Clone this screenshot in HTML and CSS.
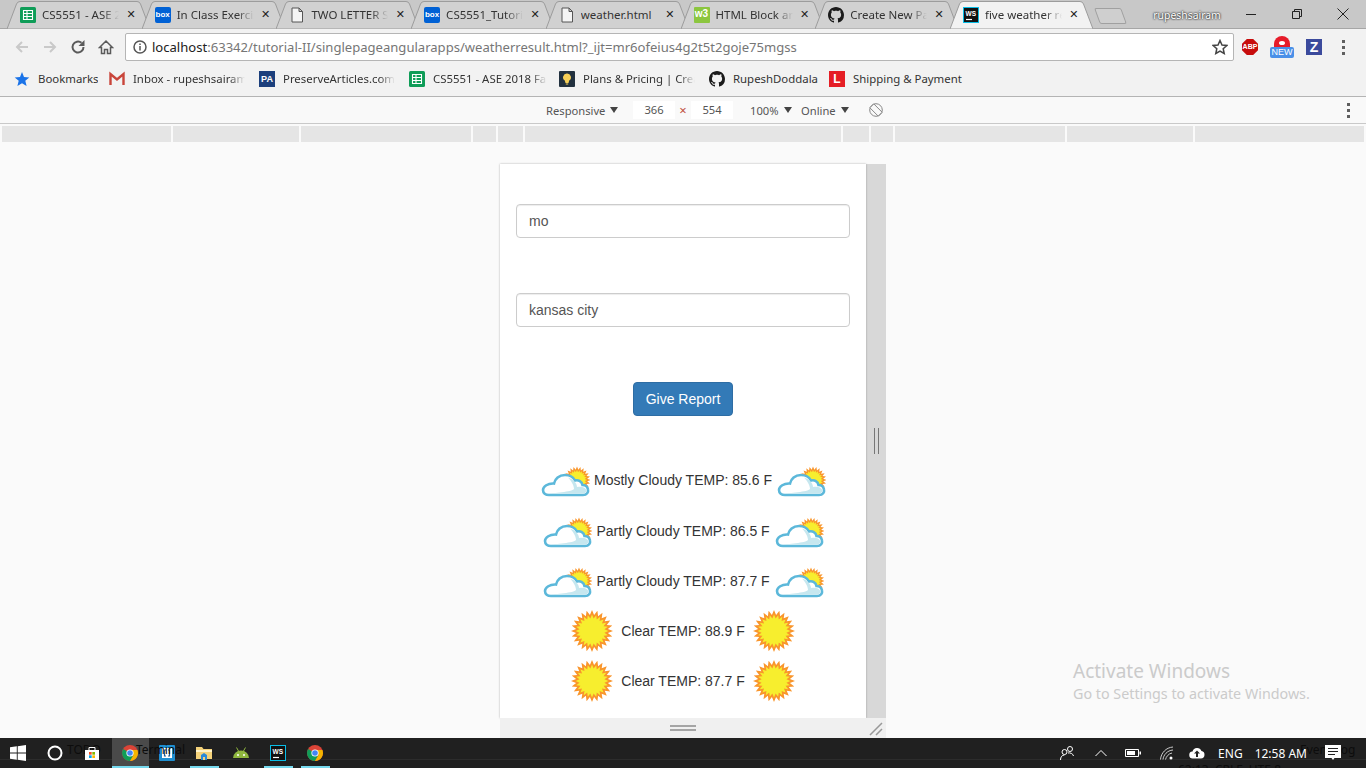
FILE: index.html
```html
<!DOCTYPE html>
<html lang="en">
<head>
  <meta charset="UTF-8">
  <title>five weather report</title>
  <link rel="stylesheet" href="styles.css">
</head>
<body>
  <!-- shared shapes -->
  <svg class="defs" width="0" height="0">
    <symbol id="tab-shape" viewBox="0 0 143 28">
      <path d="M0 28.5 9.5 3.5Q10.5 1 13 1H130Q132.500 1 133.500 3.500L143 28.500Z"/>
    </symbol>
    <symbol id="sheet" viewBox="0 0 16 16">
      <rect width="16" height="16" rx="1.500" fill="#0f9d58"/>
      <path d="M3.500 3.500h9v9h-9zM3.500 6.500h9M3.500 9.500h9M7 3.500v9" fill="none" stroke="#fff" stroke-width="1.100"/>
    </symbol>
    <symbol id="page" viewBox="0 0 16 16">
      <path d="M3 1h7l3.500 3.500V15H3zM10 1v3.500h3.500" fill="#f4f4f4" stroke="#555" stroke-width="1"/>
    </symbol>
    <symbol id="github" viewBox="0 0 16 16">
      <path d="M8 0C3.580 0 0 3.580 0 8c0 3.540 2.290 6.530 5.470 7.590.4.070.55-.17.55-.38 0-.19-.01-.82-.01-1.490-2.010.37-2.530-.49-2.690-.94-.09-.23-.48-.94-.82-1.130-.28-.15-.68-.52-.01-.53.63-.01 1.080.58 1.230.82.720 1.210 1.870.87 2.330.66.070-.52.280-.87.510-1.070-1.780-.2-3.640-.89-3.640-3.950 0-.87.310-1.590.820-2.150-.08-.2-.36-1.020.080-2.120 0 0 .670-.21 2.200.82.640-.18 1.320-.27 2-.27.680 0 1.360.090 2 .27 1.530-1.040 2.200-.82 2.200-.82.440 1.100.160 1.920.080 2.120.510.560.820 1.270.820 2.150 0 3.070-1.870 3.750-3.650 3.950.290.250.540.730.540 1.480 0 1.070-.01 1.930-.01 2.200 0 .21.150.46.550.38A8.013 8.013 0 0016 8c0-4.420-3.580-8-8-8z" fill="#1b1b1b"/>
    </symbol>
    <symbol id="chrome" viewBox="0 0 16 16">
      <circle cx="8" cy="8" r="8" fill="#db4437"/>
      <path d="M8 8 1.100 4A8 8 0 0 0 8 16l3.500-6z" fill="#0f9d58"/>
      <path d="M8 5h7.400A8 8 0 0 1 8 16l3.500-6z" fill="#f4b400"/>
      <circle cx="8" cy="8" r="3.600" fill="#fff"/>
      <circle cx="8" cy="8" r="2.800" fill="#4285f4"/>
    </symbol>
    <symbol id="ws" viewBox="0 0 16 16">
      <rect x=".5" y=".5" width="15" height="15" fill="#111" stroke="#09bde6"/>
      <path d="M3 12.500h6" stroke="#fff" stroke-width="1.200"/>
      <text x="2.500" y="8.800" class="ws-text">WS</text>
    </symbol>
    <symbol id="cloud-sun" viewBox="0 0 50 50">
      <g transform="translate(37 25) scale(.64)">
        <use href="#burst" fill="#f9952b"/>
        <use href="#burst" fill="#f7ee2e" transform="scale(.76)"/>
        <circle r="12" fill="#f7ee2e"/>
      </g>
      <path d="M9 40H43C47 40 48.500 37 48 34.500C47.500 31.500 45 30 42.500 30C42 26.500 38.500 24.500 35 25.500C33.500 22 29 20 25 20C19 20 15 24 14 28.500C8 28 3 31.500 3 35C3 38 5.500 40 9 40Z" fill="#fff" stroke="#5cb8da" stroke-width="2.600"/>
      <path d="M28 22.500C33 24 37 28 37 32C41 31 45 32 46.500 35C46.500 37 45 38.500 43 38.700H7C13 38 32 37 34 34C34 30 31 25.500 28 22.500Z" fill="#c6e7ef"/>
    </symbol>
    <symbol id="sun" viewBox="0 0 50 50">
      <g transform="translate(25 25)">
        <use href="#burst" fill="#f9952b"/>
        <use href="#burst" fill="#f7ee2e" transform="scale(.78)"/>
        <circle r="12" fill="#f7ee2e"/>
      </g>
    </symbol>
    <polygon id="burst" points="21,0 15.900,2.100 20.300,5.400 14.800,6.100 18.200,10.500 12.700,9.700 14.800,14.800 9.700,12.700 10.500,18.200 6.100,14.800 5.400,20.300 2.100,15.900 0,21 -2.100,15.900 -5.400,20.300 -6.100,14.800 -10.500,18.200 -9.700,12.700 -14.800,14.800 -12.700,9.700 -18.200,10.500 -14.800,6.100 -20.300,5.400 -15.900,2.100 -21,0 -15.900,-2.100 -20.300,-5.400 -14.800,-6.100 -18.200,-10.500 -12.700,-9.700 -14.800,-14.800 -9.700,-12.700 -10.500,-18.200 -6.100,-14.800 -5.400,-20.300 -2.100,-15.900 0,-21 2.100,-15.900 5.400,-20.300 6.100,-14.800 10.500,-18.200 9.700,-12.700 14.800,-14.800 12.700,-9.700 18.200,-10.500 14.800,-6.100 20.300,-5.400 15.900,-2.100"/>
  </svg>

  <!-- tab strip -->
  <div class="tabstrip">
    <div class="tab"><svg class="tab-bg"><use href="#tab-shape"/></svg><svg class="ico"><use href="#sheet"/></svg><span class="tab-title">CS5551 - ASE 2018 Fall</span><span class="tab-close">&#10005;</span></div>
    <div class="tab"><svg class="tab-bg"><use href="#tab-shape"/></svg><span class="ico box-ico">box</span><span class="tab-title">In Class Exercise 5</span><span class="tab-close">&#10005;</span></div>
    <div class="tab"><svg class="tab-bg"><use href="#tab-shape"/></svg><svg class="ico"><use href="#page"/></svg><span class="tab-title">TWO LETTER STATE</span><span class="tab-close">&#10005;</span></div>
    <div class="tab"><svg class="tab-bg"><use href="#tab-shape"/></svg><span class="ico box-ico">box</span><span class="tab-title">CS5551_Tutorial</span><span class="tab-close">&#10005;</span></div>
    <div class="tab"><svg class="tab-bg"><use href="#tab-shape"/></svg><svg class="ico"><use href="#page"/></svg><span class="tab-title no-fade">weather.html</span><span class="tab-close">&#10005;</span></div>
    <div class="tab"><svg class="tab-bg"><use href="#tab-shape"/></svg><span class="ico w3-ico">w3</span><span class="tab-title">HTML Block and</span><span class="tab-close">&#10005;</span></div>
    <div class="tab"><svg class="tab-bg"><use href="#tab-shape"/></svg><svg class="ico"><use href="#github"/></svg><span class="tab-title">Create New Page</span><span class="tab-close">&#10005;</span></div>
    <div class="tab active"><svg class="tab-bg"><use href="#tab-shape"/></svg><svg class="ico"><use href="#ws"/></svg><span class="tab-title">five weather report</span><span class="tab-close">&#10005;</span></div>
    <div class="new-tab"></div>
    <span class="profile">rupeshsairam</span>
    <div class="win-controls">
      <svg width="14" height="14" viewBox="0 0 14 14"><path d="M2 7.500h10" stroke="#222"/></svg>
      <svg width="14" height="14" viewBox="0 0 14 14"><path d="M2.500 4.500h7v7h-7zM4.500 4.500v-2h7v7h-2" fill="none" stroke="#222"/></svg>
      <svg width="14" height="14" viewBox="0 0 14 14"><path d="M1.500 1.500l11 11M12.500 1.500l-11 11" stroke="#222"/></svg>
    </div>
  </div>

  <!-- address bar -->
  <div class="toolbar">
    <svg class="tool" viewBox="0 0 16 16"><path d="M14 8H3M8 3 3 8l5 5" fill="none" stroke="#c9c9c9" stroke-width="2"/></svg>
    <svg class="tool" viewBox="0 0 16 16"><path d="M2 8h11M8 3l5 5-5 5" fill="none" stroke="#c9c9c9" stroke-width="2"/></svg>
    <svg class="tool" viewBox="0 0 16 16"><path d="M13.500 8A5.500 5.500 0 1 1 11.500 3.800" fill="none" stroke="#5a5a5a" stroke-width="2"/><path d="M14.500 1v6h-6z" fill="#5a5a5a"/></svg>
    <svg class="tool" viewBox="0 0 16 16"><path d="M1.500 8.500 8 2l6.500 6.500H12.500V14.500H9.500V10.500H6.500V14.500H3.500V8.500Z" fill="none" stroke="#5a5a5a" stroke-width="1.500"/></svg>
    <div class="omnibox">
      <svg class="info" width="14" height="14" viewBox="0 0 14 14"><circle cx="7" cy="7" r="6" fill="none" stroke="#555" stroke-width="1.500"/><path d="M7 6v4.500M7 3.500v1.500" stroke="#555" stroke-width="1.500"/></svg>
      <span class="url"><b>localhost</b>:63342/tutorial-II/singlepageangularapps/weatherresult.html?_ijt=mr6ofeius4g2t5t2goje75mgss</span>
      <svg class="star" width="16" height="16" viewBox="0 0 16 16"><path d="M8 1.500 10 6l4.800.5-3.600 3.200 1 4.800L8 12l-4.200 2.500 1-4.800L1.200 6.500 6 6z" fill="none" stroke="#444" stroke-width="1.500"/></svg>
    </div>
    <div class="extensions">
      <span class="abp">ABP</span>
      <span class="ext-new"><span class="ext-dome"></span><span class="ext-badge">NEW</span></span>
      <span class="ext-z">Z</span>
      <span class="kebab"><i></i><i></i><i></i></span>
    </div>
  </div>

  <!-- bookmarks -->
  <div class="bookmarks">
    <div class="bm snug"><svg class="ico" viewBox="0 0 16 16"><path d="M8 1 10 6l5.300.4-4 3.400 1.300 5.200L8 12.200 3.400 15l1.300-5.200-4-3.400L6 6z" fill="#1a73e8"/></svg><span class="bm-name w60">Bookmarks</span></div>
    <div class="bm"><svg class="ico" viewBox="0 0 16 16"><path d="M1.500 14V3L8 8.500 14.500 3V14" fill="none" stroke="#c9453a" stroke-width="2.400"/></svg><span class="bm-name w112">Inbox - rupeshsairam</span></div>
    <div class="bm"><span class="ico pa-ico">PA</span><span class="bm-name w112">PreserveArticles.com:</span></div>
    <div class="bm tight"><svg class="ico"><use href="#sheet"/></svg><span class="bm-name w114">CS5551 - ASE 2018 Fall</span></div>
    <div class="bm"><span class="ico bulb-ico"><svg width="16" height="16" viewBox="0 0 16 16"><path d="M8 2.500a3.800 3.800 0 0 1 2.200 7L9.500 12h-3l-.7-2.500A3.800 3.800 0 0 1 8 2.500z" fill="#f6cf57"/><path d="M6.800 13h2.400" stroke="#f6cf57"/></svg></span><span class="bm-name w112">Plans &amp; Pricing | Create</span></div>
    <div class="bm snug"><svg class="ico"><use href="#github"/></svg><span class="bm-name w85">RupeshDoddala</span></div>
    <div class="bm"><span class="ico l-ico">L</span><span class="bm-name">Shipping &amp; Payment</span></div>
  </div>

  <!-- device toolbar -->
  <div class="device-bar">
    <span class="dd dd-resp">Responsive<i></i></span>
    <span class="dim">366</span><span class="times">&#215;</span><span class="dim">554</span>
    <span class="dd dd-zoom">100%<i></i></span>
    <span class="dd dd-net">Online<i></i></span>
    <svg class="rotate" width="14" height="14" viewBox="0 0 14 14"><circle cx="7" cy="7" r="6.300" fill="none" stroke="#888"/><path d="M4.800 .9 13.100 9.200 9.200 13.100 .9 4.800Z" fill="#f9f9f9" stroke="#888"/></svg>
    <span class="kebab"><i></i><i></i><i></i></span>
  </div>

  <!-- media query bars -->
  <div class="media-bar">
    <i class="m1"></i><i class="m2"></i><i class="m3"></i><i class="m4"></i><i class="m5"></i><i class="m6"></i><i class="m7"></i><i class="m8"></i><i class="m3"></i><i class="m2"></i><i class="m1"></i>
  </div>

  <!-- emulated device -->
  <div class="viewport">
    <div class="device-wrap">
      <div class="device-row">
        <main class="device">
          <input class="form-control" type="text" value="mo">
          <input class="form-control second" type="text" value="kansas city">
          <button class="btn" type="button">Give Report</button>
          <div class="report">
            <div class="day"><svg class="wx"><use href="#cloud-sun"/></svg><span>Mostly Cloudy TEMP: 85.6 F</span><svg class="wx"><use href="#cloud-sun"/></svg></div>
            <div class="day"><svg class="wx"><use href="#cloud-sun"/></svg><span>Partly Cloudy TEMP: 86.5 F</span><svg class="wx"><use href="#cloud-sun"/></svg></div>
            <div class="day"><svg class="wx"><use href="#cloud-sun"/></svg><span>Partly Cloudy TEMP: 87.7 F</span><svg class="wx"><use href="#cloud-sun"/></svg></div>
            <div class="day"><svg class="wx"><use href="#sun"/></svg><span>Clear TEMP: 88.9 F</span><svg class="wx"><use href="#sun"/></svg></div>
            <div class="day"><svg class="wx"><use href="#sun"/></svg><span>Clear TEMP: 87.7 F</span><svg class="wx"><use href="#sun"/></svg></div>
          </div>
        </main>
        <div class="handle-right"><i></i></div>
      </div>
      <div class="handle-bottom">
        <i class="grip"></i>
        <svg class="corner" width="14" height="14" viewBox="0 0 14 14"><path d="M1 13 13 1M7 13l6-6" stroke="#999" stroke-width="1.500"/></svg>
      </div>
    </div>
    <div class="activate">
      <div class="activate-title">Activate Windows</div>
      <div class="activate-sub">Go to Settings to activate Windows.</div>
    </div>
  </div>

  <!-- windows taskbar -->
  <div class="taskbar">
    <span class="ghost g-todo">TODO</span>
    <span class="ghost g-term">Terminal</span>
    <span class="ghost g-event">Event Log</span>
    <span class="ghost g-status">62:13 &nbsp;CRLF &nbsp;UTF-8</span>
    <div class="task start"><svg width="16" height="16" viewBox="0 0 16 16"><path d="M0 2.300 6.800 1.300V7.500H0zM7.700 1.200 16 0V7.500H7.700zM0 8.400H6.800V14.700L0 13.700zM7.700 8.400H16V16L7.700 14.800z" fill="#fff"/></svg></div>
    <div class="task"><svg width="16" height="16" viewBox="0 0 16 16"><circle cx="8" cy="8" r="6.500" fill="none" stroke="#fff" stroke-width="2"/></svg></div>
    <div class="task store"><svg width="16" height="16" viewBox="0 0 16 16"><path d="M1 5h14v10H1z" fill="#fff"/><path d="M5 5V2.500h6V5" fill="none" stroke="#fff"/><path d="M5 7h2.700v2.700H5z" fill="#f25022"/><path d="M8.300 7H11v2.700H8.300z" fill="#7fba00"/><path d="M5 10.300h2.700V13H5z" fill="#00a4ef"/><path d="M8.300 10.300H11V13H8.300z" fill="#ffb900"/></svg></div>
    <div class="task running current"><svg width="16" height="16"><use href="#chrome"/></svg></div>
    <div class="task"><svg width="16" height="16" viewBox="0 0 16 16"><rect width="16" height="16" rx="1" fill="#1f8fd0"/><path d="M3 3h10v10H3z" fill="#fff"/><path d="M7 5H5.500v6H7M9 5h1.500v6H9" fill="none" stroke="#1f5f8f" stroke-width="1.200"/></svg></div>
    <div class="task running"><svg width="16" height="16" viewBox="0 0 16 16"><path d="M0 2h6l1.500 2H16v10H0z" fill="#f4d27a"/><path d="M0 5h16v2H0z" fill="#fff3c9"/><path d="M5 15v-5l3-2 3 2v5z" fill="#2b8ad8"/><path d="M7 15v-3h2v3z" fill="#f4d27a"/></svg></div>
    <div class="task"><svg width="16" height="16" viewBox="0 0 16 16"><path d="M0 13a8 7.500 0 0 1 16 0z" fill="#8fb63e"/><path d="M3.500 2.500 5.500 6M12.500 2.500 10.500 6" stroke="#8fb63e"/><circle cx="5" cy="10" r="1" fill="#fff"/><circle cx="11" cy="10" r="1" fill="#fff"/></svg></div>
    <div class="task running"><svg width="16" height="16"><use href="#ws"/></svg></div>
    <div class="task running"><svg width="16" height="16"><use href="#chrome"/></svg></div>
    <div class="tray">
      <svg class="tray-people" width="16" height="16" viewBox="0 0 16 16"><circle cx="11" cy="4" r="2.500" fill="none" stroke="#fff"/><circle cx="5.500" cy="7" r="2.500" fill="none" stroke="#fff"/><path d="M1.500 15c0-3 1.500-5 4-5M9 8c2-.5 5 .5 5.500 3" fill="none" stroke="#fff"/></svg>
      <svg class="tray-caret" width="14" height="10" viewBox="0 0 14 10"><path d="M1.500 8 7 2.500 12.500 8" fill="none" stroke="#fff"/></svg>
      <svg class="tray-batt" width="16" height="10" viewBox="0 0 16 10"><path d="M.5 1.500h13v7H.5z" fill="none" stroke="#fff"/><path d="M2 3h8v4H2zM14.500 3.500H16v3h-1.500z" fill="#fff"/></svg>
      <svg class="tray-wifi" width="14" height="14" viewBox="0 0 14 14"><path d="M.5 13.500C1 7 6 1.500 13 1M3 13.500C3.500 9 7 4.500 13 4M5.500 13.500C6 11 8.500 7.500 12 7" fill="none" stroke="#ccc"/><circle cx="11" cy="12" r="1.500" fill="#fff"/></svg>
      <svg class="tray-cloud" width="16" height="12" viewBox="0 0 16 12"><path d="M4 11.500a3.500 3.500 0 0 1-.5-7A4.800 4.800 0 0 1 12.500 4a3.800 3.800 0 0 1-.5 7.500z" fill="#fff"/><path d="M8 3.500 5 6.500h2V10h2V6.500h2z" fill="#222"/></svg>
      <span class="tray-lang">ENG</span>
      <span class="tray-time">12:58 AM</span>
      <svg class="tray-note" width="16" height="16" viewBox="0 0 16 16"><path d="M0 0h16v13H9.500L8 15 6.500 13H0z" fill="#fff"/><path d="M3 3.500h10M3 6.500h10M3 9.500h7" stroke="#222"/></svg>
    </div>
  </div>
</body>
</html>
```

FILE: styles.css
```css
* { box-sizing: border-box; }
html, body { height: 100%; }
body {
  margin: 0;
  height: 768px;
  overflow: hidden;
  display: flex;
  flex-direction: column;
  background: #fafafa;
  font-family: "Noto Sans", "Open Sans", sans-serif;
  font-size: 12px;
  color: #333;
}
.defs { position: absolute; }
.ico { width: 16px; height: 16px; flex: none; }
.ws-text { font: bold 6.500px "Liberation Sans", sans-serif; fill: #fff; }

/* tabs */
.tabstrip {
  height: 29px;
  flex: none;
  display: flex;
  padding-left: 7px;
  background: #c8c8c8;
  box-shadow: inset 0 -1px 0 #a6a6a6;
  position: relative;
}
.tab {
  position: relative;
  width: 143px;
  margin-right: -8.300px;
  height: 29px;
  flex: none;
  display: flex;
  align-items: center;
  padding: 0 0 0 13px;
  color: #333;
  font-size: 11.500px;
}
.tab-bg {
  position: absolute;
  left: 0;
  top: 0;
  width: 143px;
  height: 29px;
  fill: #d1d1d1;
  stroke: #9c9c9c;
  stroke-width: 1;
}
.tab.active { z-index: 2; }
.tab.active .tab-bg { fill: #f2f2f2; }
.tab > .ico, .tab-title, .tab-close { position: relative; }
.tab-title {
  margin-left: 6px;
  width: 77px;
  white-space: nowrap;
  overflow: hidden;
  -webkit-mask-image: linear-gradient(to right, #000 78%, transparent 100%);
  mask-image: linear-gradient(to right, #000 78%, transparent 100%);
}
.tab-title.no-fade { -webkit-mask-image: none; mask-image: none; }
.tab-close {
  margin-left: 6px;
  width: 12px;
  text-align: center;
  font-size: 11px;
  font-weight: bold;
  color: #222;
  font-family: "DejaVu Sans", sans-serif;
}
.box-ico {
  background: #0061d5;
  color: #fff;
  border-radius: 2px;
  font: bold 8px/16px "Liberation Sans", sans-serif;
  text-align: center;
}
.w3-ico {
  background: #8cc63f;
  color: #fff;
  border-radius: 1px;
  font: bold 10px/14px "Liberation Sans", sans-serif;
  text-align: center;
}
.new-tab {
  position: relative;
  margin: 8px 0 0 12.700px;
  width: 27px;
  height: 16px;
  background: #cfcfcf;
  border: 1px solid #a0a0a0;
  border-radius: 2px;
  transform: skewX(20deg);
  z-index: 1;
}
.profile {
  margin: 8px 0 0 29px;
  width: 67px;
  color: #fff;
  font-size: 10.400px;
  text-shadow: 0 0 2px #222, 0 0 2px #222;
  white-space: nowrap;
}
.win-controls {
  display: flex;
  margin-left: 24px;
  padding-top: 7px;
  gap: 32px;
  align-items: flex-start;
}

/* toolbar */
.toolbar {
  height: 36px;
  flex: none;
  display: flex;
  align-items: center;
  padding-left: 14px;
  background: #f2f2f2;
}
.tool { width: 16px; height: 16px; margin-right: 12px; flex: none; }
.omnibox {
  width: 1109px;
  height: 28px;
  margin-left: -1px;
  flex: none;
  display: flex;
  align-items: center;
  padding: 0 5px 0 7px;
  background: #fff;
  border: 1px solid #b5b5b5;
  border-radius: 2px;
}
.url {
  margin-left: 5px;
  color: #767676;
  font-size: 13.070px;
  white-space: nowrap;
}
.url b { font-weight: normal; color: #222; }
.star { margin-left: auto; }
.extensions {
  display: flex;
  align-items: center;
  margin-left: 8px;
}
.abp {
  width: 16px;
  height: 16px;
  background: #c70d0d;
  clip-path: polygon(30% 0, 70% 0, 100% 30%, 100% 70%, 70% 100%, 30% 100%, 0 70%, 0 30%);
  color: #fff;
  font: bold 7px/16px "Liberation Sans", sans-serif;
  text-align: center;
}
.ext-new {
  position: relative;
  width: 24px;
  height: 22px;
  margin-left: 12px;
}
.ext-dome {
  display: block;
  width: 16px;
  height: 12px;
  margin: 0 auto;
  background: #e61c2a;
  border-radius: 8px 8px 0 0;
}
.ext-dome::after {
  content: "";
  display: block;
  width: 6px;
  height: 4px;
  margin: 0 auto;
  position: relative;
  top: 5px;
  background: #fff;
  border-radius: 50%;
}
.ext-badge {
  position: absolute;
  left: 0;
  top: 11px;
  width: 24px;
  height: 11px;
  background: #4a90e8;
  border-radius: 2px;
  color: #fff;
  font: 9px/11px "Liberation Sans", sans-serif;
  text-align: center;
}
.ext-z {
  width: 16px;
  height: 16px;
  margin-left: 12px;
  background: #3b4a9c;
  color: #fff;
  font: bold 14px/16px "Liberation Sans", sans-serif;
  text-align: center;
}
.kebab {
  display: flex;
  flex-direction: column;
  gap: 3px;
  margin-left: 20px;
}
.kebab i {
  width: 3px;
  height: 3px;
  background: #5f5f5f;
}

/* bookmarks */
.bookmarks {
  height: 32px;
  flex: none;
  display: flex;
  align-items: center;
  padding: 0 0 4px 14px;
  background: #f2f2f2;
  border-bottom: 1px solid #b4b4b4;
  color: #333;
}
.bm {
  display: flex;
  align-items: center;
  gap: 8px;
  margin-right: 14px;
  font-size: 11.400px;
  white-space: nowrap;
}
.bm.tight { margin-right: 12px; }
.bm.snug { margin-right: 11px; }
.bm-name { overflow: hidden; }
.w60 { width: 60px; }
.w85 { width: 85px; }
.w112, .w114 {
  width: 112px;
  -webkit-mask-image: linear-gradient(to right, #000 86%, transparent 100%);
  mask-image: linear-gradient(to right, #000 86%, transparent 100%);
}
.w114 { width: 114px; }
.pa-ico {
  background: #1c3f7c;
  color: #fff;
  font: bold 9px/16px "Liberation Sans", sans-serif;
  text-align: center;
}
.bulb-ico { background: #22313f; display: block; border-radius: 1px; }
.bulb-ico svg { display: block; }
.l-ico {
  background: #e51e25;
  color: #fff;
  font: bold 12px/16px "Liberation Sans", sans-serif;
  text-align: center;
}

/* device toolbar */
.device-bar {
  height: 27px;
  flex: none;
  display: flex;
  align-items: center;
  padding: 0 16px 0 546px;
  background: #f9f9f9;
  border-bottom: 1px solid #c9c9c9;
  color: #555;
  font-size: 11.200px;
}
.dd { display: flex; align-items: center; white-space: nowrap; }
.dd i {
  margin-left: 5px;
  border-left: 4px solid transparent;
  border-right: 4px solid transparent;
  border-top: 6px solid #444;
}
.dd-resp { width: 87px; }
.dim {
  width: 42px;
  height: 18px;
  line-height: 18px;
  text-align: center;
  background: #fff;
}
.times { width: 16px; text-align: center; color: #c0503c; font-size: 13px; }
.dd-zoom { margin-left: 17px; width: 51px; }
.dd-net { width: 68px; }
.device-bar .kebab { margin-left: auto; }
.rotate { flex: none; }

/* media query bars */
.media-bar {
  height: 18px;
  flex: none;
  display: flex;
  gap: 2px;
  padding: 2px 2px 0;
  background: #fafafa;
}
.media-bar i { background: #e5e5e5; height: 16px; }
.m1 { width: 169px; }
.m2 { width: 126px; }
.m3 { width: 170px; }
.m4 { width: 23px; }
.m5 { width: 25px; }
.m6 { width: 316px; }
.m7 { width: 26px; }
.m8 { width: 22px; }

/* device */
.viewport {
  flex: 1;
  position: relative;
  display: flex;
  justify-content: center;
  padding: 22px 0 0 20px;
  background: #fafafa;
  overflow: hidden;
}
.device-wrap { width: 386px; }
.device-row { display: flex; height: 554px; }
.device {
  width: 366px;
  padding: 40px 16px 0;
  background: #fff;
  box-shadow: 0 0 2px rgba(0,0,0,.3);
  font-family: "Liberation Sans", Arial, sans-serif;
  font-size: 14px;
  color: #333;
  position: relative;
}
.handle-right {
  width: 20px;
  background: #d8d8d8;
  display: flex;
  align-items: center;
  justify-content: center;
}
.handle-right i {
  width: 5px;
  height: 26px;
  border-left: 1px solid #777;
  border-right: 1px solid #777;
}
.handle-bottom {
  height: 20px;
  background: #f0f0f0;
  display: flex;
  align-items: center;
  justify-content: center;
  padding-right: 20px;
  position: relative;
}
.grip {
  width: 26px;
  height: 6px;
  border-top: 2px solid #a5a5a5;
  border-bottom: 2px solid #a5a5a5;
}
.corner { position: absolute; right: 3px; top: 4px; }
.form-control {
  display: block;
  width: 100%;
  height: 34px;
  padding: 6px 12px;
  font: 14px "Liberation Sans", Arial, sans-serif;
  color: #555;
  background: #fff;
  border: 1px solid #ccc;
  border-radius: 4px;
  box-shadow: inset 0 1px 1px rgba(0,0,0,.075);
}
.form-control.second { margin-top: 55px; }
.btn {
  display: block;
  margin: 55px auto 0;
  width: 100px;
  height: 34px;
  padding: 0;
  font: 14px "Liberation Sans", Arial, sans-serif;
  color: #fff;
  background: #337ab7;
  border: 1px solid #2e6da4;
  border-radius: 4px;
}
.report { margin-top: 39px; }
.day {
  height: 50px;
  display: flex;
  align-items: center;
  justify-content: center;
  gap: 4px;
  white-space: nowrap;
}
.day:first-child { margin-bottom: 1px; }
.wx { width: 50px; height: 50px; flex: none; }
.activate {
  position: absolute;
  left: 1073px;
  top: 517px;
  color: #cbcbcb;
}
.activate-title { font-size: 19px; line-height: 25px; }
.activate-sub { font-size: 14.300px; line-height: 20px; white-space: nowrap; }

/* taskbar */
.taskbar {
  height: 30px;
  flex: none;
  position: relative;
  display: flex;
  align-items: stretch;
  background: #202020;
  overflow: hidden;
  color: #fff;
}
.taskbar::before {
  content: "";
  position: absolute;
  left: 0;
  right: 0;
  top: 21px;
  height: 1px;
  background: #2c2c2c;
}
.task {
  position: relative;
  width: 37px;
  display: flex;
  align-items: center;
  justify-content: center;
  flex: none;
}
.task.start { width: 36px; }
.task.store { width: 38.500px; }
.task.running::after {
  content: "";
  position: absolute;
  left: 4px;
  right: 4px;
  bottom: 0;
  height: 2px;
  background: #76d9ee;
}
.task.current { background: #4a4a4a; }
.task.current::after { left: 0; right: 0; }
.ghost {
  position: absolute;
  color: #0c0c0c;
  font-size: 12px;
  white-space: nowrap;
}
.g-todo { left: 67px; top: 3px; }
.g-term { left: 136px; top: 3px; z-index: 1; }
.g-event { left: 1300px; top: 3px; }
.g-status { left: 1178px; top: 23px; }
.tray {
  margin-left: auto;
  position: relative;
  display: flex;
  align-items: center;
  padding-right: 25px;
  font-size: 12px;
}
.tray-caret { margin-left: 19px; }
.tray-batt { margin-left: 17px; }
.tray-wifi { margin-left: 19px; }
.tray-cloud { margin-left: 15px; }
.tray-lang { margin-left: 13px; }
.tray-time { margin-left: 12px; }
.tray-note { margin-left: 18px; }
```
